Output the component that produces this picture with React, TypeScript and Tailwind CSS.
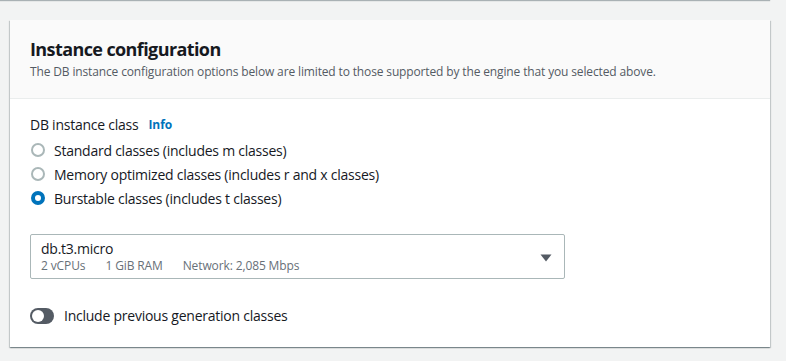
const radios = [
  { label: 'Standard classes (includes m classes)', checked: false },
  { label: 'Memory optimized classes (includes r and x classes)', checked: false },
  { label: 'Burstable classes (includes t classes)', checked: true },
]

export default function App() {
  return (
    <div className="h-[361px] w-[786px] overflow-hidden bg-[#f2f3f3] font-['Open_Sans',sans-serif] text-[#16191f]">
      {/* previous panel, mostly scrolled out of view */}
      <div className="-mt-[10px] mr-[16px] h-[10px] bg-white shadow-[0_1px_1px_0_rgba(0,28,36,0.3)]" />

      <div className="ml-[10px] mr-[16px] mt-[20px] bg-white shadow-[0_1px_1px_0_rgba(0,28,36,0.3),1px_1px_1px_0_rgba(0,28,36,0.15),-1px_1px_1px_0_rgba(0,28,36,0.15)]">
        <div className="border-b border-[#eaeded] bg-[#fafafa] px-[20px] pb-[18px] pt-[18px]">
          <h2 className="text-[18px] font-bold leading-[22px] tracking-[-0.6px]">Instance configuration</h2>
          <p className="mt-[4px] text-[12px] leading-[16px] tracking-[-0.14px] text-[#545b64]">
            The DB instance configuration options below are limited to those supported by the engine that you selected above.
          </p>
        </div>

        <div className="px-[20px] pb-[21px] pt-[16px] tracking-[-0.24px]">
          <div className="flex items-center gap-[10px] text-[14px] leading-[20px]">
            <span>DB instance class</span>
            <span className="text-[12px] font-bold tracking-[-0.1px] text-[#0073bb]">Info</span>
          </div>

          <div className="mt-[3px] flex flex-col">
            {radios.map((r) => (
              <label key={r.label} className="flex h-[24px] items-center gap-[9px] text-[14px]">
                {r.checked ? (
                  <span className="ml-[1px] h-[14px] w-[14px] rounded-full border-[4px] border-[#0073bb] bg-white" />
                ) : (
                  <span className="ml-[1px] h-[14px] w-[14px] rounded-full border-2 border-[#aab7b8] bg-white" />
                )}
                <span>{r.label}</span>
              </label>
            ))}
          </div>

          <div className="mt-[24px] flex h-[45px] w-[535px] items-center justify-between rounded-[2px] border border-[#aab7b8] pl-[10px] pr-[12px]">
            <div className="flex flex-col">
              <span className="text-[14px] leading-[18px]">db.t3.micro</span>
              <span className="flex gap-[20px] text-[12px] leading-[16px] tracking-[-0.12px] text-[#687078]">
                <span>2 vCPUs</span>
                <span>1 GiB RAM</span>
                <span>Network: 2,085 Mbps</span>
              </span>
            </div>
            <svg width="12" height="8" viewBox="0 0 12 8" className="mt-[2px]">
              <path d="M0.5 0.5 L11.5 0.5 L6 7.5 Z" fill="#545b64" />
            </svg>
          </div>

          <div className="mt-[26px] flex items-center gap-[10px] text-[14px]">
            <span className="relative h-[16px] w-[24px] rounded-full bg-[#545b64]">
              <span className="absolute left-[2px] top-[2px] h-[12px] w-[12px] rounded-full bg-white" />
            </span>
            <span>Include previous generation classes</span>
          </div>
        </div>
      </div>
    </div>
  )
}
